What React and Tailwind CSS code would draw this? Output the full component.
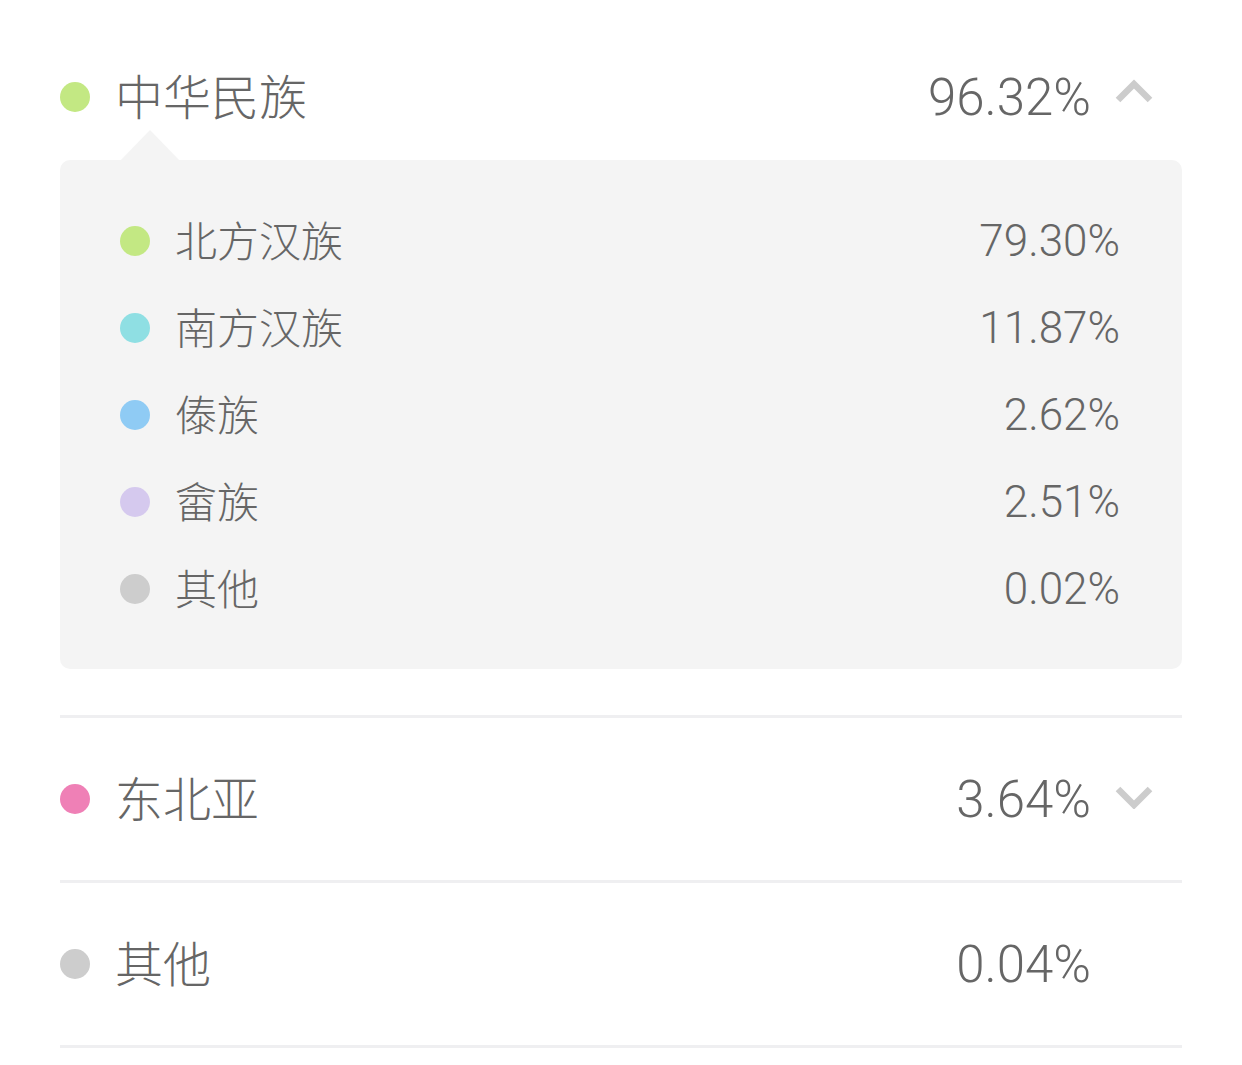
const inner = [
  { name: "北方汉族", value: "79.30%", color: "bg-[#c3e883]" },
  { name: "南方汉族", value: "11.87%", color: "bg-[#8fdfe3]" },
  { name: "傣族", value: "2.62%", color: "bg-[#8fcbf4]" },
  { name: "畲族", value: "2.51%", color: "bg-[#d5c9ee]" },
  { name: "其他", value: "0.02%", color: "bg-[#cdcdcd]" },
];

const cjk = { fontFamily: '"Noto Sans CJK SC", "Noto Sans", sans-serif' };
const num = { fontFamily: 'Roboto, "Liberation Sans", sans-serif' };

function Chevron({ up }) {
  return (
    <svg
      width="38"
      height="24"
      viewBox="0 0 38 24"
      className={"shrink-0 " + (up ? "mb-[12px]" : "mb-[4px]")}
    >
      <path
        d={up ? "M3 21 L19 5 L35 21" : "M3 4 L19 20 L35 4"}
        fill="none"
        stroke="#cccccc"
        strokeWidth="6.5"
      />
    </svg>
  );
}

function Header({ name, value, color, open, className }) {
  return (
    <div className={"flex items-center " + className}>
      <span className={"w-[30px] h-[30px] rounded-full shrink-0 " + color} />
      <span className="ml-[25px] mb-[6px] text-[48px] leading-none font-light text-[#666]" style={cjk}>
        {name}
      </span>
      <span className="ml-auto text-[51px] leading-none font-light text-[#666]" style={num}>
        {value}
      </span>
      <div className="w-[91px] flex items-center pl-[24px]">
        {open !== undefined && <Chevron up={open} />}
      </div>
    </div>
  );
}

export default function App() {
  return (
    <div className="w-[1242px] h-[1065px] bg-white px-[60px] pt-[34px]">
      <Header name="中华民族" value="96.32%" color="bg-[#c3e883]" open className="h-[126px]" />
      <div className="relative bg-[#f4f4f4] rounded-[10px] pl-[60px] pr-[62px] py-[37px]">
        <svg
          width="60"
          height="31"
          viewBox="0 0 60 31"
          className="absolute left-[60px] top-[-30px]"
        >
          <path d="M0 31 L30 0 L60 31 Z" fill="#f4f4f4" />
        </svg>
        {inner.map((r) => (
          <div key={r.name} className="flex items-center h-[87px]">
            <span className={"w-[30px] h-[30px] rounded-full shrink-0 " + r.color} />
            <span className="ml-[25px] mb-[4px] text-[42px] leading-none font-light text-[#666]" style={cjk}>
              {r.name}
            </span>
            <span className="ml-auto text-[44px] leading-none font-light text-[#666]" style={num}>
              {r.value}
            </span>
          </div>
        ))}
      </div>
      <div className="mt-[46px] border-t-[3px] border-[#efeff1]" />
      <Header name="东北亚" value="3.64%" color="bg-[#ef80b6]" open={false} className="h-[162px]" />
      <div className="border-t-[3px] border-[#efeff1]" />
      <Header name="其他" value="0.04%" color="bg-[#cdcdcd]" className="h-[162px]" />
      <div className="border-t-[3px] border-[#efeff1]" />
    </div>
  );
}
